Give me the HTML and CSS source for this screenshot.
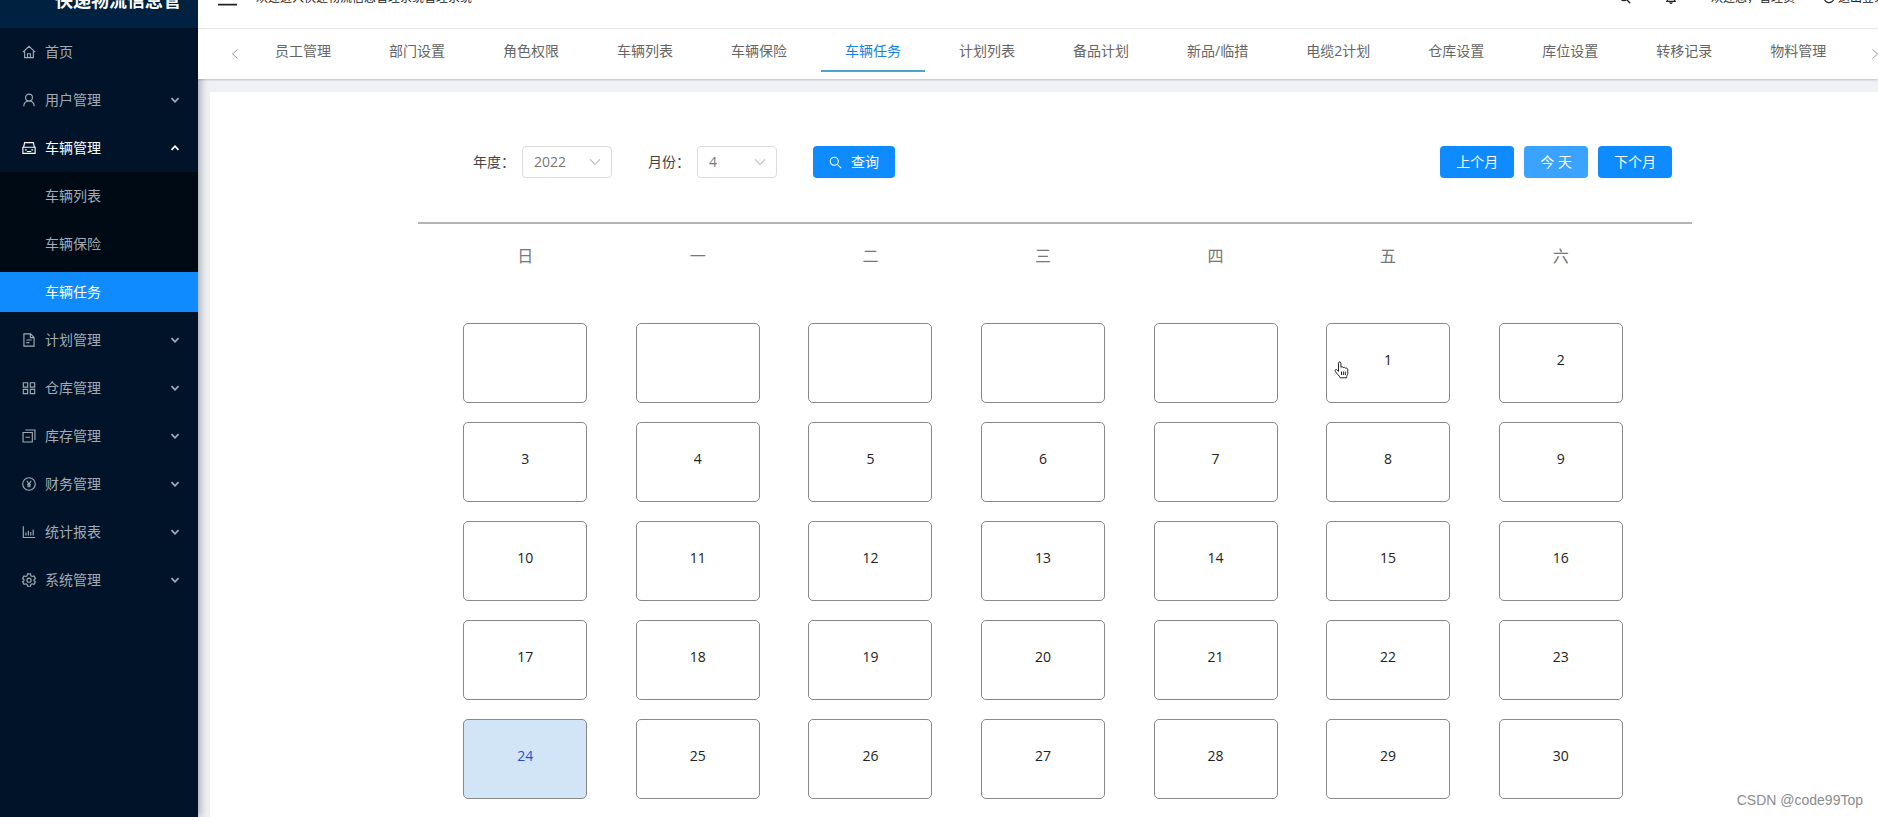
FILE: index.html
```html
<!doctype html>
<html lang="zh-CN">
<head>
<meta charset="utf-8">
<title>车辆任务</title>
<link rel="stylesheet" href="styles.css">
</head>

<body>
<svg class="sprite" aria-hidden="true">
	<symbol id="down" viewBox="0 0 10 10"><path d="M1.5 3.2L5 6.8l3.5-3.6"/></symbol>
	<symbol id="search" viewBox="0 0 16 16"><circle cx="6.5" cy="6.5" r="5"/><path d="M10.3 10.3L15 15"/></symbol>
</svg>
<div class="app">
	<aside class="sider">
		<div class="logo">快递物流信息管</div>
		<nav class="menu">
			<a href="#" class="item"><svg class="icon" viewBox="0 0 16 16"><path d="M1 8.2L8 1.5l7 6.7M3 7v7.5h10V7M6.3 14.5V10h3.4v4.5"/></svg>首页</a>
			<a href="#" class="item"><svg class="icon" viewBox="0 0 16 16"><circle cx="8" cy="5.2" r="3.9"/><path d="M2 15.2c.2-3.600 2.300-6 6-6s5.800 2.400 6 6"/></svg>用户管理<svg class="arrow"><use href="#down"/></svg></a>
			<a href="#" class="item open"><svg class="icon" viewBox="0 0 16 16"><path d="M1 7.200h14v7H1zM1.800 7.200l1.200-5.400h10l1.200 5.400M3.300 10.200h2M10.700 10.200h2M5.500 12h5"/></svg>车辆管理<svg class="arrow"><use href="#down"/></svg></a>
			<div class="submenu">
				<a href="#" class="item">车辆列表</a>
				<a href="#" class="item">车辆保险</a>
				<a href="#" class="item selected">车辆任务</a>
			</div>
			<a href="#" class="item"><svg class="icon" viewBox="0 0 16 16"><path d="M2.200 1h7.600l4 4v10H2.200zM9.500 1v4.300h4.300M5 8h6M5 11h3.500"/></svg>计划管理<svg class="arrow"><use href="#down"/></svg></a>
			<a href="#" class="item"><svg class="icon" viewBox="0 0 16 16"><path d="M1.500 2h5v5h-5zM9.500 2h5v5h-5zM1.500 9.500h5v5h-5zM9.500 9.500h5v5h-5z"/></svg>仓库管理<svg class="arrow"><use href="#down"/></svg></a>
			<a href="#" class="item"><svg class="icon" viewBox="0 0 16 16"><path d="M1.200 4h10.600v10.800H1.200zM4 9.400h5M3.800 1.200h11v11.300"/></svg>库存管理<svg class="arrow"><use href="#down"/></svg></a>
			<a href="#" class="item"><svg class="icon" viewBox="0 0 16 16"><circle cx="8" cy="8" r="7.200"/><path d="M5.500 4.300L8 8l2.500-3.700M8 8v4M5.700 8.300h4.600M5.700 10.300h4.600"/></svg>财务管理<svg class="arrow"><use href="#down"/></svg></a>
			<a href="#" class="item"><svg class="icon" viewBox="0 0 16 16"><path d="M1.500 1.500v12.800h13.500M4.500 12V8.500M7.300 12V6.500M10 12V8M12.800 12V5"/></svg>统计报表<svg class="arrow"><use href="#down"/></svg></a>
			<a href="#" class="item"><svg class="icon" viewBox="0 0 16 16"><path d="M6.300 1h3.400l.5 2.200 1.300.8 2.200-.7 1.600 2.900L13.700 7.700v1.100l1.600 1.300-1.600 2.900-2.200-.7-1.300.8-.5 2H6.300l-.5-2-1.300-.8-2.200.7-1.600-2.900 1.600-1.300V7.700L.7 6.200l1.600-2.900 2.200.7 1.300-.8z"/><circle cx="8" cy="8.200" r="2.400"/></svg>系统管理<svg class="arrow"><use href="#down"/></svg></a>
		</nav>
	</aside>

	<div class="main">
		<header class="topbar">
			<div class="topbar_row">
				<svg class="fold" viewBox="0 0 20 18"><path d="M0 2h20M0 9h20M0 16h20"/></svg>
				<span class="welcome">欢迎进入快递物流信息管理系统管理系统</span>
				<svg class="tool"><use href="#search"/></svg>
				<svg class="tool bell" viewBox="0 0 16 16"><path d="M1.500 12.500h13M3.300 12.500V7a4.700 4.700 0 0 1 9.400 0v5.500M6.500 13.500a1.500 1.500 0 0 0 3 0"/></svg>
				<span class="user">欢迎您，管理员</span>
				<a href="#" class="logout"><svg viewBox="0 0 16 16"><path d="M13 3.500A6.500 6.500 0 1 0 14.500 8"/></svg>退出登录</a>
			</div>
		</header>
		<nav class="tabs">
			<button class="turn" aria-label="向左"><svg viewBox="0 0 10 10"><path d="M7.500 .5L2.500 5l5 4.500"/></svg></button>
			<div class="tab_list">
				<a href="#">员工管理</a>
				<a href="#">部门设置</a>
				<a href="#">角色权限</a>
				<a href="#">车辆列表</a>
				<a href="#">车辆保险</a>
				<a href="#" class="active">车辆任务</a>
				<a href="#">计划列表</a>
				<a href="#">备品计划</a>
				<a href="#">新品/临措</a>
				<a href="#">电缆2计划</a>
				<a href="#">仓库设置</a>
				<a href="#">库位设置</a>
				<a href="#">转移记录</a>
				<a href="#">物料管理</a>
			</div>
			<button class="turn next" aria-label="向右"><svg viewBox="0 0 10 10"><path d="M2.500 .5l5 4.500-5 4.500"/></svg></button>
		</nav>

		<main class="content">
			<section class="panel">
				<form class="filter">
					<label for="year">年度：</label>
					<span class="select year"><select id="year"><option>2022</option></select><svg><use href="#down"/></svg></span>
					<label for="month">月份：</label>
					<span class="select month"><select id="month"><option>4</option></select><svg><use href="#down"/></svg></span>
					<button type="button" class="btn query"><svg><use href="#search"/></svg>查询</button>
					<div class="jump">
						<button type="button" class="btn">上个月</button>
						<button type="button" class="btn hover">今 天</button>
						<button type="button" class="btn">下个月</button>
					</div>
				</form>
				<div class="calendar">
					<table>
						<thead>
							<tr><th>日</th><th>一</th><th>二</th><th>三</th><th>四</th><th>五</th><th>六</th></tr>
						</thead>
						<tbody>
							<tr>
								<td><div class="day"></div></td>
								<td><div class="day"></div></td>
								<td><div class="day"></div></td>
								<td><div class="day"></div></td>
								<td><div class="day"></div></td>
								<td><button class="day">1<svg class="hand" viewBox="0 0 16 18"><path d="M4.500 10.500V2.200c0-1.800 2.400-1.800 2.400 0V6.300c.6-1 2.100-.7 2.300.4.700-.8 2.100-.5 2.300.6.900-.6 2.300 0 2.300 1.300v3.600c0 1.500-1.300 2.500-1.300 4.600H6.100C5.500 14.700 2.500 12.700 1.300 10.300c-.8-1.600 1-2.500 2-1.300z"/><path d="M7.500 10.500v3.500M9.400 10.500v3.500M11.300 10.500v3.500"/></svg></button></td>
								<td><button class="day">2</button></td>
							</tr>
							<tr>
								<td><button class="day">3</button></td>
								<td><button class="day">4</button></td>
								<td><button class="day">5</button></td>
								<td><button class="day">6</button></td>
								<td><button class="day">7</button></td>
								<td><button class="day">8</button></td>
								<td><button class="day">9</button></td>
							</tr>
							<tr>
								<td><button class="day">10</button></td>
								<td><button class="day">11</button></td>
								<td><button class="day">12</button></td>
								<td><button class="day">13</button></td>
								<td><button class="day">14</button></td>
								<td><button class="day">15</button></td>
								<td><button class="day">16</button></td>
							</tr>
							<tr>
								<td><button class="day">17</button></td>
								<td><button class="day">18</button></td>
								<td><button class="day">19</button></td>
								<td><button class="day">20</button></td>
								<td><button class="day">21</button></td>
								<td><button class="day">22</button></td>
								<td><button class="day">23</button></td>
							</tr>
							<tr>
								<td><button class="day today">24</button></td>
								<td><button class="day">25</button></td>
								<td><button class="day">26</button></td>
								<td><button class="day">27</button></td>
								<td><button class="day">28</button></td>
								<td><button class="day">29</button></td>
								<td><button class="day">30</button></td>
							</tr>
						</tbody>
					</table>
				</div>
			</section>
		</main>
	</div>
</div>
<div class="watermark">CSDN @code99Top</div>
</body>
</html>
```
FILE: styles.css
```css
* {box-sizing: border-box;}
body {margin: 0; overflow: hidden; font: 14px/22px "Open Sans", "Noto Sans CJK SC", sans-serif; color: #444;}
a {color: inherit; text-decoration: none;}
button, select {margin: 0; padding: 0; border: 0; background: none; font: inherit; color: inherit; cursor: pointer;}
svg {flex: none; fill: none; stroke: currentColor;}
.sprite {position: absolute; width: 0; height: 0;}

.app {display: flex; height: 100vh;}

/* sidebar */
.sider {flex: none; position: relative; z-index: 1; width: 198px; background: #001329; box-shadow: 2px 0 8px rgba(0,21,41,.35);}
.logo {display: flex; align-items: flex-end; height: 28px; padding-left: 55px; background: #002140; color: #fff; font-size: 18px; font-weight: bold; line-height: 56px; white-space: nowrap;}
.menu {padding-top: 4px; color: #a2abb4;}
.item {display: flex; align-items: center; height: 40px; margin-bottom: 8px; padding: 0 18px 0 22px;}
.icon {width: 14px; height: 14px; margin-right: 9px; stroke-width: 1.3;}
.arrow {width: 10px; height: 10px; margin-left: auto; stroke-width: 1.7;}
.item.open {margin-bottom: 4px; color: #fff;}
.open .arrow {transform: rotate(180deg);}
.submenu {margin-bottom: 8px; padding-top: 4px; background: #000a14;}
.submenu .item {padding-left: 45px;}
.submenu .selected {margin-bottom: 0; background: #0f8bff; color: #fff;}

/* header */
.main {flex: 1; display: flex; flex-direction: column; min-width: 0; background: #eff1f4;}
.topbar {flex: none; position: relative; z-index: 2; display: flex; align-items: flex-end; height: 29px; padding-left: 20px; background: #fff; border-bottom: 1px solid #e6e6e6; color: #222; font-size: 12px;}
.topbar_row {flex: 1; display: flex; align-items: center; height: 60px; margin-right: -8px; white-space: nowrap;}
.fold {width: 19px; height: 18px; margin-right: 19px; stroke-width: 2;}
.welcome {margin-right: auto;}
.tool {width: 12px; height: 12px; margin-right: 34px; stroke-width: 1.7;}
.logout {display: flex; align-items: center; margin-left: 28px;}
.logout svg {width: 12px; height: 12px; margin-right: 3px; stroke-width: 1.6;}

.tabs {flex: none; position: relative; z-index: 2; display: flex; height: 50px; padding-left: 21px; background: #fff; box-shadow: 0 1px 2px rgba(0,0,0,.2); color: #666;}
.turn {flex: none; width: 32px; color: #999;}
.turn svg {display: block; width: 10px; height: 10px; margin: 0 auto;}
.turn.next {width: 10px; margin-right: -2px;}
.tab_list {flex: 1; display: flex; gap: 10px; min-width: 0; overflow: hidden; white-space: nowrap;}
.tab_list a {height: 43px; padding: 11px 24px 0;}
.tab_list .active {border-bottom: 2px solid #4ba4cf; color: #1682e6;}

/* calendar */
.content {flex: 1; margin: 13px 0 0 12px; padding: 54px 0 0 22px; background: #fff;}
.panel {max-width: 1274px; margin: 0 auto;}
.filter {display: flex; align-items: center; padding: 0 20px 44px 55px; border-bottom: 2px solid #b4b4b4;}
.select {position: relative; margin: 0 36px 0 7px;}
.select select {width: 100%; height: 32px; padding-left: 11px; border: 1px solid #dcdcdc; border-radius: 4px; appearance: none; background: #fff; color: #777;}
.select svg {position: absolute; top: 9px; right: 10px; width: 14px; height: 14px; stroke: #bbb; stroke-width: .8; pointer-events: none;}
.year {width: 90px;}
.month {width: 80px;}
.btn {height: 32px; padding: 0 16px; border-radius: 4px; background: #0d8bff; color: #fff; white-space: nowrap;}
.btn.hover {background: #3aa2ff;}
.query {display: flex; align-items: center;}
.query svg {width: 13px; height: 13px; margin-right: 9px; stroke-width: 1.3;}
.jump {display: flex; gap: 10px; margin-left: auto;}
.calendar {padding: 0 45px 0 21px;}
table {width: 100%; table-layout: fixed; border-collapse: collapse;}
th {padding: 21px 0 56px; color: #777; font-size: 16px; font-weight: normal;}
td {padding: 0 0 19px;}
.day {display: block; position: relative; width: 124px; height: 80px; margin: 0 auto; padding-bottom: 6px; border: 1px solid #888; border-radius: 5px; color: #222;}
.today {background: #d2e5f6; color: #2c4fd0;}
.hand {position: absolute; top: 37px; left: 7px; width: 16px; height: 18px; fill: #fff; stroke: #222;}

.watermark {position: absolute; right: 15px; bottom: 6px; color: #8c8c8c; font-family: "Liberation Sans", sans-serif;}
```
